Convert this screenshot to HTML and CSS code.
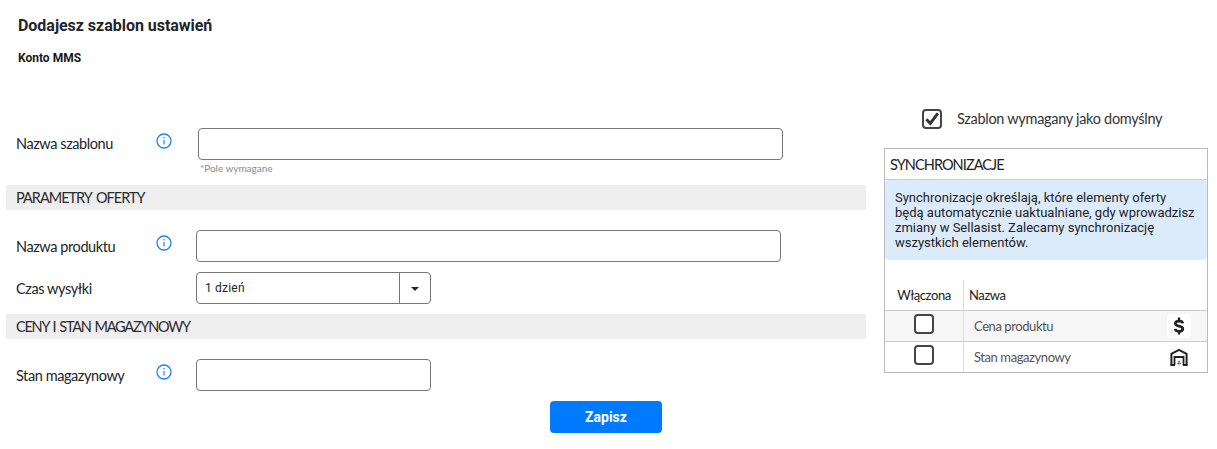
FILE: index.html
```html
<!DOCTYPE html>
<html lang="pl">
<head>
<meta charset="utf-8">
<title>Dodajesz szablon ustawień</title>
<link rel="stylesheet" href="styles.css">
</head>
<body>
<div class="page">
  <main class="left">
    <h1 class="title">Dodajesz szablon ustawień</h1>
    <h2 class="account">Konto MMS</h2>
    <div class="row row-first">
      <label class="label label-first">Nazwa szablonu</label>
      <svg class="info" viewBox="0 0 16 16" width="16" height="16"><circle cx="8" cy="8" r="7" fill="none" stroke="#1b84f0" stroke-width="1.3"/><path d="M8 7v4.5" stroke="#1b84f0" stroke-width="1.2"/><circle cx="8" cy="4.8" r=".8" fill="#1b84f0"/></svg>
      <input class="input input-wide input-shift" type="text">
    </div>
    <div class="hint">*Pole wymagane</div>
    <div class="section">PARAMETRY OFERTY</div>
    <div class="row row-product">
      <label class="label">Nazwa produktu</label>
      <svg class="info" viewBox="0 0 16 16" width="16" height="16"><circle cx="8" cy="8" r="7" fill="none" stroke="#1b84f0" stroke-width="1.3"/><path d="M8 7v4.5" stroke="#1b84f0" stroke-width="1.2"/><circle cx="8" cy="4.8" r=".8" fill="#1b84f0"/></svg>
      <input class="input input-wide" type="text">
    </div>
    <div class="row row-select">
      <label class="label">Czas wysyłki</label>
      <span class="info-blank"></span>
      <div class="select">
        <span class="select-value">1 dzień</span>
        <span class="select-arrow"><span class="caret"></span></span>
      </div>
    </div>
    <div class="section section-gap">CENY I STAN MAGAZYNOWY</div>
    <div class="row row-stock">
      <label class="label">Stan magazynowy</label>
      <svg class="info" viewBox="0 0 16 16" width="16" height="16"><circle cx="8" cy="8" r="7" fill="none" stroke="#1b84f0" stroke-width="1.3"/><path d="M8 7v4.5" stroke="#1b84f0" stroke-width="1.2"/><circle cx="8" cy="4.8" r=".8" fill="#1b84f0"/></svg>
      <input class="input input-narrow" type="text">
    </div>
    <div class="actions"><button class="save" type="button">Zapisz</button></div>
  </main>
  <aside class="right">
    <div class="default-row">
      <span class="box box-checked"><svg viewBox="0 0 20 20" width="20" height="20"><path d="M4.400 10.200l3.900 4.200 7.500-10" fill="none" stroke="#333" stroke-width="3"/></svg></span>
      <span class="default-text">Szablon wymagany jako domyślny</span>
    </div>
    <section class="panel">
      <h3 class="panel-title">SYNCHRONIZACJE</h3>
      <p class="notice">Synchronizacje określają, które elementy oferty będą automatycznie uaktualniane, gdy wprowadzisz zmiany w Sellasist. Zalecamy synchronizację wszystkich elementów.</p>
      <div class="table-head">
        <div class="col-on head-cell">Włączona</div>
        <div class="col-name head-cell head-name">Nazwa</div>
      </div>
      <div class="table-row table-row-alt">
        <div class="col-on"><span class="box"></span></div>
        <div class="col-name">
          <span class="name-text">Cena produktu</span>
          <span class="icon-tile"><svg viewBox="0 0 24 24" width="24" height="24"><path d="M15.800 9.400c-.2-1.500-1.700-2.300-3.800-2.300-2.200 0-3.700 1-3.700 2.500 0 3.500 7.500 1.600 7.500 5.100 0 1.600-1.500 2.600-3.800 2.600-2.100 0-3.600-.8-3.800-2.400" fill="none" stroke="#222" stroke-width="2.700"/><path d="M12 3.600v3.500M12 17v3.400" stroke="#222" stroke-width="2.400"/></svg></span>
        </div>
      </div>
      <div class="table-row">
        <div class="col-on"><span class="box"></span></div>
        <div class="col-name">
          <span class="name-text">Stan magazynowy</span>
          <span class="icon-tile"><svg viewBox="0 0 24 24" width="24" height="24"><path d="M4.400 20V8.800L12 4.800l7.600 4V20" fill="none" stroke="#222" stroke-width="2"/><path d="M7.500 20v-8h9v8" fill="none" stroke="#222" stroke-width="1.800"/><path d="M3.400 20h4.600M16 20h4.600" stroke="#222" stroke-width="1.800"/><path d="M10.600 18.500h1.200M12.400 18.500h1.200M11.400 16.500h1.200" stroke="#222" stroke-width="1.400"/></svg></span>
        </div>
      </div>
    </section>
  </aside>
</div>
</body>
</html>
```

FILE: styles.css
```css
* { box-sizing: border-box; }
html, body { margin: 0; padding: 0; background: #fff; }
body { font-family: Roboto, "Liberation Sans", sans-serif; color: #212529; }
.page { display: flex; align-items: flex-start; width: 1217px; height: 449px; overflow: hidden; padding-left: 6px; }
.left { width: 860px; flex: none; }
.right { width: 324px; flex: none; margin-left: 18px; padding-top: 108px; }

.title { margin: 0; padding: 16px 0 0 12px; font-size: 16px; line-height: 19px; font-weight: 700; color: #212529; letter-spacing: -.03px; }
.account { margin: 0; padding: 16px 0 0 12px; font-size: 12px; line-height: 14px; font-weight: 700; color: #1a1a1a; }

.row { display: flex; align-items: flex-start; padding-left: 10px; }
.row-first { margin-top: 63px; height: 32px; }
.row-product { margin-top: 20px; height: 32px; }
.row-select { margin-top: 10px; height: 32px; }
.row-stock { margin-top: 20px; height: 32px; }

.label { width: 140px; flex: none; font-family: Lato, sans-serif; font-size: 14.5px; line-height: 34px; color: #212529; letter-spacing: -.42px; }
.label-first { line-height: 32px; }
.info { flex: none; margin-top: 5px; margin-right: 24px; }
.info-blank { flex: none; width: 40px; }
.input { display: block; height: 32px; padding: 0 8px; border: 1px solid #777; border-radius: 4px; background: #fff; outline: none; flex: none; }
.input-wide { width: 585px; }
.input-narrow { width: 235px; }
.input-shift { margin-left: 2px; }

.hint { padding: 2px 0 0 194px; font-family: Lato, sans-serif; font-size: 10px; line-height: 12px; color: #8b8b8b; height: 25px; letter-spacing: -.03px; }
.section { height: 25px; padding-left: 10px; background: #eee; font-family: Lato, sans-serif; font-size: 14.5px; line-height: 25px; color: #2b2b2b; letter-spacing: -1px; word-spacing: 2px; }
.section-gap { margin-top: 10px; letter-spacing: -1.25px; word-spacing: 1.5px; }

.select { display: flex; width: 235px; height: 32px; border: 1px solid #777; border-radius: 4px; flex: none; }
.select-value { flex: 1; padding-left: 8px; font-size: 12px; line-height: 30px; color: #212529; letter-spacing: .2px; }
.select-arrow { width: 31px; flex: none; border-left: 1px solid #777; display: flex; align-items: center; justify-content: center; }
.caret { width: 0; height: 0; border-left: 4px solid transparent; border-right: 4px solid transparent; border-top: 4px solid #212529; margin-top: 1px; }

.actions { display: flex; justify-content: flex-start; padding: 10px 0 0 544px; }
.save { width: 112px; height: 32px; border: 0; border-radius: 4px; background: #007bff; color: #fff; font-family: Roboto, sans-serif; font-size: 14px; font-weight: 700; padding: 0; }

.default-row { display: flex; align-items: center; height: 22px; padding-left: 38px; margin-bottom: 18px; }
.default-text { margin-left: 15px; font-family: Lato, sans-serif; font-size: 14.5px; line-height: 20px; color: #333; letter-spacing: -.3px; }
.box { display: block; width: 20px; height: 20px; border: 2px solid #444; border-radius: 4px; background: #fff; flex: none; }
.box svg { display: block; margin: -2px; }

.panel { border: 1px solid #bbb; width: 324px; height: 225px; }
.panel-title { margin: 0; height: 31px; padding-left: 5px; border-bottom: 1px solid #ccc; font-family: Lato, sans-serif; font-size: 14.5px; font-weight: 400; line-height: 31px; color: #222; letter-spacing: -.93px; }
.notice { margin: 0; height: 80px; padding: 10px 10px 0 10px; background: #dcebfb; border-radius: 4px; font-size: 13px; line-height: 15px; color: #222; }

.table-head { display: flex; height: 31px; margin-top: 20px; border-bottom: 1px solid #ccc; }
.table-row { display: flex; height: 31px; border-bottom: 1px solid #ccc; }
.table-row:last-child { border-bottom: 0; height: 30px; }
.table-row-alt { background: #f6f6f6; }
.col-on { width: 79px; flex: none; border-right: 1px solid #ddd; display: flex; justify-content: center; align-items: center; }
.col-name { flex: 1; display: flex; align-items: center; justify-content: space-between; padding: 0 16px 0 10px; }
.head-cell { font-family: Lato, sans-serif; font-size: 13px; color: #222; letter-spacing: -.4px; }
.head-name { padding-left: 5px; }
.table-row .box { margin-bottom: 4px; }
.name-text { font-family: Lato, sans-serif; font-size: 13px; color: #555; letter-spacing: -.42px; }
.icon-tile { width: 24px; height: 24px; background: #fff; border-radius: 4px; display: block; }
.icon-tile svg { display: block; }
.table-row:last-child .icon-tile { background: transparent; }
```
